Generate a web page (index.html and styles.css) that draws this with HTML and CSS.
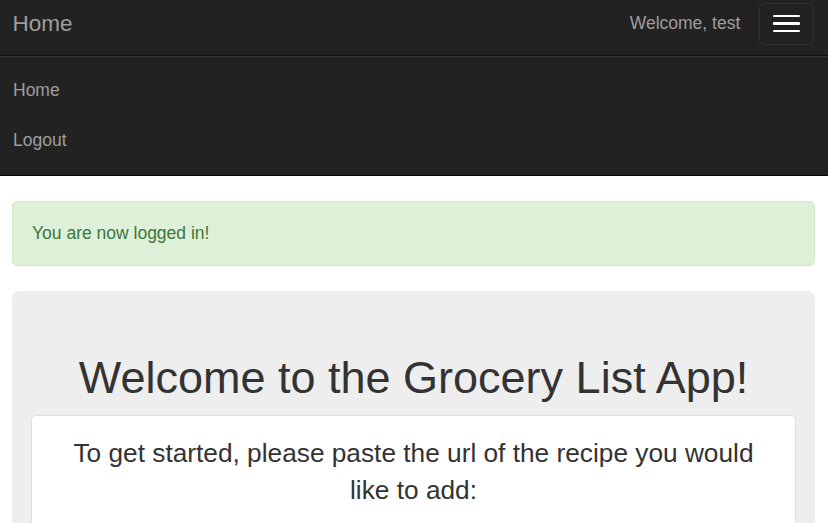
FILE: index.html
```html
<!DOCTYPE html>
<html lang="en">
<head>
<meta charset="utf-8">
<title>Home</title>
<link rel="stylesheet" href="styles.css">
</head>
<body>
<nav class="navbar">
  <div class="navbar-header">
    <a class="brand" href="#">Home</a>
    <div class="header-right">
      <span class="navbar-text">Welcome, test</span>
      <button class="toggle" type="button" aria-label="Toggle navigation">
        <span class="bar"></span>
        <span class="bar"></span>
        <span class="bar"></span>
      </button>
    </div>
  </div>
  <div class="collapse">
    <ul class="nav">
      <li><a href="#">Home</a></li>
      <li><a href="#">Logout</a></li>
    </ul>
  </div>
</nav>
<main class="container">
  <div class="alert">You are now logged in!</div>
  <section class="jumbotron">
    <h1 class="title">Welcome to the Grocery List App!</h1>
    <div class="panel">
      <p class="lead">To get started, please paste the url of the recipe you would like to add:</p>
    </div>
  </section>
</main>
</body>
</html>
```

FILE: styles.css
```css
html, body {
  margin: 0;
  padding: 0;
}
body {
  font-family: "Liberation Sans", Arial, Helvetica, sans-serif;
  font-size: 17.5px;
  line-height: 25px;
  color: #333;
  background: #fff;
}
a {
  text-decoration: none;
}
.navbar {
  background: #222;
  border-bottom: 1px solid #080808;
  margin-bottom: 25px;
}
.navbar-header {
  height: 55px;
  display: flex;
  justify-content: space-between;
  align-items: flex-start;
}
.brand {
  color: #9d9d9d;
  font-size: 22.5px;
  line-height: 25px;
  padding: 11px 0 0 12.5px;
}
.header-right {
  display: flex;
  align-items: flex-start;
}
.navbar-text {
  color: #9d9d9d;
  margin: 11px 18.75px 0 0;
}
.toggle {
  margin: 2.5px 14.5px 0 0;
  padding: 11.25px 12.5px;
  width: 54.5px;
  height: 42px;
  box-sizing: border-box;
  background: transparent;
  border: 1px solid #333;
  border-radius: 5px;
  display: flex;
  flex-direction: column;
  gap: 5px;
  cursor: pointer;
}
.bar {
  display: block;
  width: 27.5px;
  height: 2.5px;
  background: #fff;
  border-radius: 1px;
}
.collapse {
  border-top: 1px solid #101010;
  box-shadow: inset 0 1px 0 rgba(255, 255, 255, 0.1);
}
.nav {
  list-style: none;
  margin: 9.375px 0;
  padding: 0;
}
.nav a {
  display: block;
  color: #9d9d9d;
  padding: 12.5px 13px;
  line-height: 25px;
}
.container {
  padding: 0 13px 0 12px;
}
.alert {
  background: #dff0d8;
  border: 1px solid #d6e9c6;
  border-radius: 5px;
  color: #3c763d;
  padding: 19px 19px;
  margin-bottom: 25px;
}
.jumbotron {
  background: #eee;
  border-radius: 7.5px;
  padding: 37.5px 18.75px;
}
.title {
  margin: 25px 0 12.5px;
  font-size: 45px;
  font-weight: 500;
  line-height: 1.1;
  text-align: center;
  color: #333;
}
.panel {
  background: #fff;
  border: 1px solid #ddd;
  border-radius: 5px;
  padding: 18.75px;
}
.lead {
  max-width: 700px;
  margin: 0 auto 18.75px;
  font-size: 26.25px;
  line-height: 36.5px;
  text-align: center;
}
```
